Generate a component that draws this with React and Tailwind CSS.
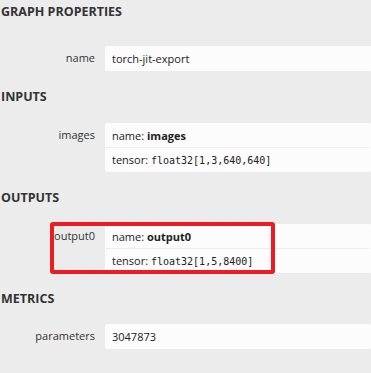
import React from "react";

const sans = { fontFamily: '"Open Sans", "Noto Sans", sans-serif' };

function Heading({ children, className = "" }) {
  return (
    <div
      className={`font-bold text-[12.5px] leading-[15px] h-[15px] text-[#333] pl-[1px] whitespace-nowrap ${className}`}
    >
      {children}
    </div>
  );
}

function Row({ label, children, outline = false }) {
  return (
    <div className="relative flex">
      <div className="w-[95px] shrink-0 text-right text-[11px] leading-[15px] pt-[7px] text-[#333]">
        {label}
      </div>
      <div className="ml-[10px] flex-1 my-[3px] bg-[#fcfcfc] border border-[#fcfcfc] rounded-l-[2px] text-[11px] text-[#222]">
        {children}
      </div>
      {outline && (
        <div className="absolute left-[50px] top-[1px] w-[225px] h-[52px] border-[4px] border-[#ec1c24] rounded-[3px] pointer-events-none" />
      )}
    </div>
  );
}

function Line({ children, border = false }) {
  return (
    <div
      className={`px-[6px] py-[4px] leading-[15px] whitespace-nowrap overflow-hidden ${
        border ? "h-[24px] border-t border-[#efefef]" : "h-[23px]"
      }`}
    >
      {children}
    </div>
  );
}

const Mono = ({ children }) => (
  <span className="font-['DejaVu_Sans_Mono',monospace] text-[10px] leading-[10px]">
    {children}
  </span>
);

export default function App() {
  return (
    <div
      className="w-[371px] h-[373px] overflow-hidden bg-[#ececec]"
      style={sans}
    >
      <Heading className="pt-[4px] h-[19px]">GRAPH PROPERTIES</Heading>
      <div className="mt-[24px]">
        <Row label="name">
          <Line>torch-jit-export</Line>
        </Row>
      </div>
      <Heading className="mt-[15px]">INPUTS</Heading>
      <div className="mt-[16px]">
        <Row label="images">
          <Line>
            name: <b>images</b>
          </Line>
          <Line border>
            tensor: <Mono>float32[1,3,640,640]</Mono>
          </Line>
        </Row>
      </div>
      <Heading className="mt-[15px]">OUTPUTS</Heading>
      <div className="mt-[16px]">
        <Row label="output0" outline>
          <Line>
            name: <b>output0</b>
          </Line>
          <Line border>
            tensor: <Mono>float32[1,5,8400]</Mono>
          </Line>
        </Row>
      </div>
      <Heading className="mt-[15px]">METRICS</Heading>
      <div className="mt-[15px]">
        <Row label="parameters">
          <Line>3047873</Line>
        </Row>
      </div>
    </div>
  );
}
